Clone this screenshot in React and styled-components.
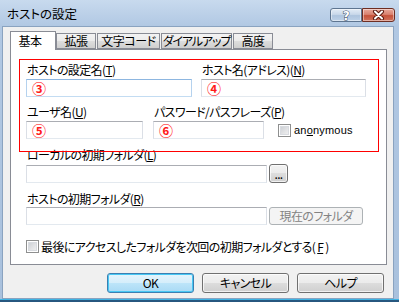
import React from 'react';
import styled, { createGlobalStyle } from 'styled-components';

const jp = `"Noto Sans CJK JP", "Noto Sans", sans-serif`;

const Global = createGlobalStyle`
  body {
    margin: 0;
    background: #fff;
  }
  * {
    box-sizing: border-box;
  }
`;

const Window = styled.div`
  width: 399px;
  height: 302px;
  display: flex;
  flex-direction: column;
  background: linear-gradient(to bottom, #c8daee 0, #b1c8e3 26px, #a9c1dd 100%);
  border-bottom: 2px solid #27577f;
  box-shadow: inset 0 -1px #3fb4e4;
  font-family: ${jp};
  font-size: 12px;
  font-feature-settings: "palt";
  letter-spacing: -0.6px;
  color: #000;
`;

const TitleBar = styled.div`
  height: 26px;
  display: flex;
  align-items: flex-start;
  padding: 0 4px 0 7px;
`;

const Title = styled.div`
  flex: 1;
  margin-top: 6px;
  line-height: 15px;
  font-size: 12.5px;
  letter-spacing: 0;
`;

const CaptionButton = styled.div`
  width: ${p => p.$width}px;
  height: 14px;
  margin-top: 8px;
  display: flex;
  align-items: center;
  justify-content: center;
  border: 1px solid ${p => (p.$close ? '#6e2e22' : '#5e7590')};
  border-radius: ${p => (p.$close ? '0 3px 3px 0' : '3px 0 0 3px')};
  background: ${p =>
    p.$close
      ? 'linear-gradient(to bottom, #e9a99b 0%, #d98270 45%, #c6523a 55%, #d0725c 100%)'
      : 'linear-gradient(to bottom, #e3ecf6 0%, #c9d8ea 45%, #aec4de 55%, #bed2e8 100%)'};
  box-shadow: inset 0 0 0 1px rgba(255, 255, 255, 0.45);
`;

const Client = styled.div`
  flex: 1;
  margin: 0 5px 1px 2px;
  border: 1px solid #8aa3c0;
  background: #f0f0f0;
  padding: 4px 6px 0 7px;
  display: flex;
  flex-direction: column;
`;

const TabStrip = styled.div`
  display: flex;
  align-items: flex-end;
  gap: 1px;
  height: 18px;
  position: relative;
  z-index: 1;
`;

const Tab = styled.div`
  width: ${p => p.$width}px;
  height: ${p => (p.$active ? 19 : 16)}px;
  margin-bottom: ${p => (p.$active ? -1 : 0)}px;
  margin-right: ${p => (p.$active ? -1 : 0)}px;
  border: 1px solid #898c95;
  border-bottom: ${p => (p.$active ? 'none' : '1px solid #898c95')};
  background: ${p =>
    p.$active ? '#fff' : 'linear-gradient(to bottom, #f3f3f3 0%, #ebebeb 50%, #dddddd 51%, #cfcfcf 100%)'};
  display: flex;
  align-items: center;
  justify-content: center;
  padding-right: ${p => (p.$active ? 6 : 0)}px;
  line-height: 14px;
  white-space: nowrap;
  letter-spacing: ${p => p.$tight ? -1.1 : -0.4}px;
`;

const Panel = styled.div`
  position: relative;
  height: 216px;
  border: 1px solid #898c95;
  background: #fff;
  padding: 13px 0 0 15px;
  display: flex;
  flex-direction: column;
`;

const Marked = styled.div`
  position: absolute;
  left: 8px;
  top: 9px;
  width: 360px;
  height: 93px;
  border: 1px solid #ff0000;
  pointer-events: none;
`;

const Group = styled.div`
  display: flex;
  flex-direction: column;
  gap: ${p => p.$gap}px;
  margin-top: ${p => p.$top || 0}px;
`;

const Row = styled.div`
  display: flex;
  align-items: flex-end;
  gap: ${p => p.$gap || 0}px;
`;

const Field = styled.div`
  width: ${p => p.$width}px;
  display: flex;
  flex-direction: column;
  gap: ${p => p.$gap}px;
`;

const Label = styled.div`
  height: 14px;
  line-height: 14px;
  padding-left: 1px;
  white-space: nowrap;
`;

const TextBox = styled.div`
  width: ${p => p.$width || '100%'};
  height: 18px;
  border: 1px solid;
  border-color: ${p => (p.$focus ? '#8db6e0 #b5d2ee #c3dcf2 #b5d2ee' : '#abadb3 #dbdfe6 #e3e9ef #dbdfe6')};
  background: #fff;
  display: flex;
  align-items: center;
  padding-left: 5px;
`;

const Marker = styled.span`
  color: #ff1a1a;
  font-size: 14px;
  font-weight: 700;
  line-height: 1;
  letter-spacing: 0;
`;

const Check = styled.span`
  width: 13px;
  height: 13px;
  flex: none;
  border: 1px solid #8e8f8f;
  background: linear-gradient(135deg, #c5c9cf 0%, #e4e5e7 60%, #f4f4f4 100%);
  box-shadow: inset 0 0 0 1px #fff, inset 0 0 0 2px #d8dbe0;
`;

const CheckLine = styled.label`
  display: flex;
  align-items: center;
  gap: ${p => p.$gap}px;
  height: 14px;
  margin-left: ${p => p.$left || 0}px;
  margin-top: ${p => p.$top || 0}px;
  margin-bottom: ${p => p.$bottom || 0}px;
  white-space: nowrap;
`;

const Latin = styled.span`
  font-family: "Liberation Sans", Arial, sans-serif;
  font-size: 11px;
  letter-spacing: 0.2px;
`;

const PushButton = styled.button`
  width: ${p => p.$width}px;
  height: ${p => p.$height}px;
  margin-top: ${p => p.$top || 0}px;
  padding: 0;
  font-family: ${jp};
  font-size: 12px;
  font-feature-settings: "palt";
  letter-spacing: -0.6px;
  line-height: 1;
  color: #000;
  border: 1px solid #707070;
  border-radius: 3px;
  background: linear-gradient(to bottom, #f2f2f2 0%, #ebebeb 49%, #dddddd 50%, #cfcfcf 100%);
  box-shadow: inset 0 0 0 1px rgba(255, 255, 255, 0.7);

  &:disabled {
    border-color: #adb2b5;
    background: #f4f4f4;
    color: #838383;
    box-shadow: none;
  }

  ${p =>
    p.$default &&
    `
    border-color: #3c7fb1;
    background: linear-gradient(to bottom, #e5f4fc 0%, #d5eefb 49%, #bde5f9 50%, #a9daf5 100%);
    box-shadow: inset 0 0 0 1px #48c8f4;
  `}
`;

const ButtonRow = styled.div`
  display: flex;
  justify-content: flex-end;
  gap: 8px;
  margin-top: 8px;
  padding-right: 3px;
`;

const CloseGlyph = () => (
  <svg width="13" height="10" viewBox="0 0 13 10">
    <path d="M3 1.5 L10 8.5 M10 1.5 L3 8.5" stroke="#5b1a10" strokeWidth="4" strokeLinecap="round" />
    <path d="M3 1.5 L10 8.5 M10 1.5 L3 8.5" stroke="#fff" strokeWidth="2" strokeLinecap="round" />
  </svg>
);

const HelpGlyph = () => (
  <svg width="10" height="12" viewBox="0 0 10 12">
    <text
      x="5"
      y="10.5"
      textAnchor="middle"
      fontFamily="DejaVu Sans, sans-serif"
      fontWeight="bold"
      fontSize="12"
      fill="#fff"
      stroke="#3d5068"
      strokeWidth="1"
      paintOrder="stroke"
    >
      ?
    </text>
  </svg>
);

const tabs = [
  { name: '基本', width: 46, active: true },
  { name: '拡張', width: 40 },
  { name: '文字コード', width: 63 },
  { name: 'ダイアルアップ', width: 71, tight: true },
  { name: '高度', width: 40 },
];

export default function App() {
  return (
    <>
      <Global />
      <Window>
        <TitleBar>
          <Title>ホストの設定</Title>
          <CaptionButton $width={32}>
            <HelpGlyph />
          </CaptionButton>
          <CaptionButton $width={33} $close>
            <CloseGlyph />
          </CaptionButton>
        </TitleBar>

        <Client>
          <TabStrip>
            {tabs.map(t => (
              <Tab key={t.name} $width={t.width} $active={t.active} $tight={t.tight}>
                {t.name}
              </Tab>
            ))}
          </TabStrip>

          <Panel>
            <Group $gap={8}>
              <Row $gap={9}>
                <Field $width={166} $gap={2}>
                  <Label>ホストの設定名(<u>T</u>)</Label>
                  <TextBox $focus>
                    <Marker>③</Marker>
                  </TextBox>
                </Field>
                <Field $width={165} $gap={2}>
                  <Label>ホスト名(アドレス)(<u>N</u>)</Label>
                  <TextBox>
                    <Marker>④</Marker>
                  </TextBox>
                </Field>
              </Row>
              <Row $gap={10}>
                <Field $width={117} $gap={2}>
                  <Label>ユーザ名(<u>U</u>)</Label>
                  <TextBox>
                    <Marker>⑤</Marker>
                  </TextBox>
                </Field>
                <Field $width={111} $gap={2}>
                  <Label>パスワード/パスフレーズ(<u>P</u>)</Label>
                  <TextBox>
                    <Marker>⑥</Marker>
                  </TextBox>
                </Field>
                <CheckLine $gap={3} $left={4} $bottom={2}>
                  <Check />
                  <Latin>
                    an<u>o</u>nymous
                  </Latin>
                </CheckLine>
              </Row>
            </Group>

            <Group $gap={9} $top={9}>
              <Field $width={270} $gap={1}>
                <Label>ローカルの初期フォルダ(<u>L</u>)</Label>
                <Row $gap={2}>
                  <TextBox $width="241px" />
                  <PushButton $width={19} $height={19} $top={1} style={{ alignSelf: 'flex-start' }}>
                    ...
                  </PushButton>
                </Row>
              </Field>
              <Field $width={340} $gap={1}>
                <Label>ホストの初期フォルダ(<u>R</u>)</Label>
                <Row $gap={2}>
                  <TextBox $width="241px" />
                  <PushButton $width={94} $height={18} disabled>
                    現在のフォルダ
                  </PushButton>
                </Row>
              </Field>
            </Group>

            <CheckLine $gap={2} $top={14}>
              <Check />
              最後にアクセスしたフォルダを次回の初期フォルダとする(<u>F</u>)
            </CheckLine>

            <Marked />
          </Panel>

          <ButtonRow>
            <PushButton $width={87} $height={20} $default>
              OK
            </PushButton>
            <PushButton $width={87} $height={20}>
              キャンセル
            </PushButton>
            <PushButton $width={87} $height={20}>
              ヘルプ
            </PushButton>
          </ButtonRow>
        </Client>
      </Window>
    </>
  );
}
